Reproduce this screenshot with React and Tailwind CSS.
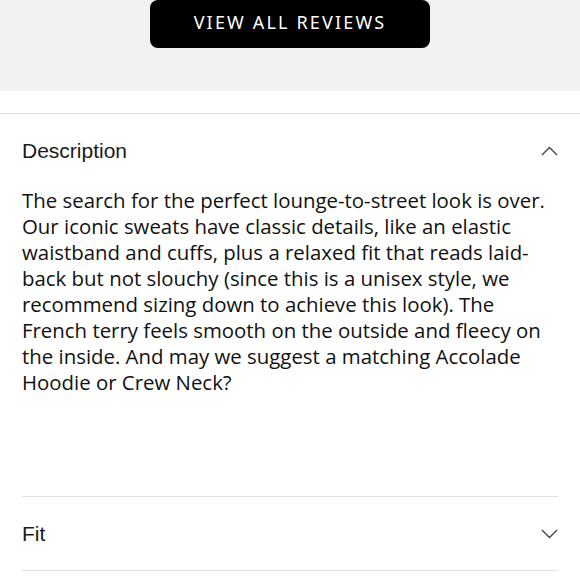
const lines = [
  "The search for the perfect lounge-to-street look is over.",
  "Our iconic sweats have classic details, like an elastic",
  "waistband and cuffs, plus a relaxed fit that reads laid-",
  "back but not slouchy (since this is a unisex style, we",
  "recommend sizing down to achieve this look). The",
  "French terry feels smooth on the outside and fleecy on",
  "the inside. And may we suggest a matching Accolade",
  "Hoodie or Crew Neck?",
];

const Chevron = ({ up }) => (
  <svg width="17" height="10" viewBox="0 0 17 10" fill="none" stroke="#444" strokeWidth="1.4">
    {up ? <path d="M1 9 L8.5 1.5 L16 9" /> : <path d="M1 1 L8.5 8.5 L16 1" />}
  </svg>
);

export default function App() {
  return (
    <div className="w-[580px] h-[580px] overflow-hidden bg-white text-[#111]">
      <div className="h-[91px] bg-[#f2f2f2] flex justify-center">
        <button className="w-[280px] h-[48px] pb-[3px] rounded-lg bg-black text-white text-[18px] tracking-[0.12em] font-['Noto_Sans',sans-serif]">
          VIEW ALL REVIEWS
        </button>
      </div>
      <div className="h-[22px]" />
      <div className="border-t border-[#e3e3e3]">
        <div className="px-[22px]">
          <div className="flex items-center justify-between h-[73px]">
            <span className="text-[21px] font-['Liberation_Sans',sans-serif] text-[#1a1a1a]">Description</span>
            <Chevron up />
          </div>
          <div className="text-[20.4px] leading-[26px] font-['Open_Sans',sans-serif]">
            {lines.map((l) => (
              <div key={l} className="whitespace-nowrap">{l}</div>
            ))}
          </div>
          <div className="h-[101px]" />
          <div className="border-t border-[#e3e3e3] flex items-center justify-between h-[74px]">
            <span className="text-[21px] font-['Liberation_Sans',sans-serif] text-[#1a1a1a]">Fit</span>
            <Chevron />
          </div>
          <div className="border-t border-[#e3e3e3]" />
        </div>
      </div>
    </div>
  );
}
